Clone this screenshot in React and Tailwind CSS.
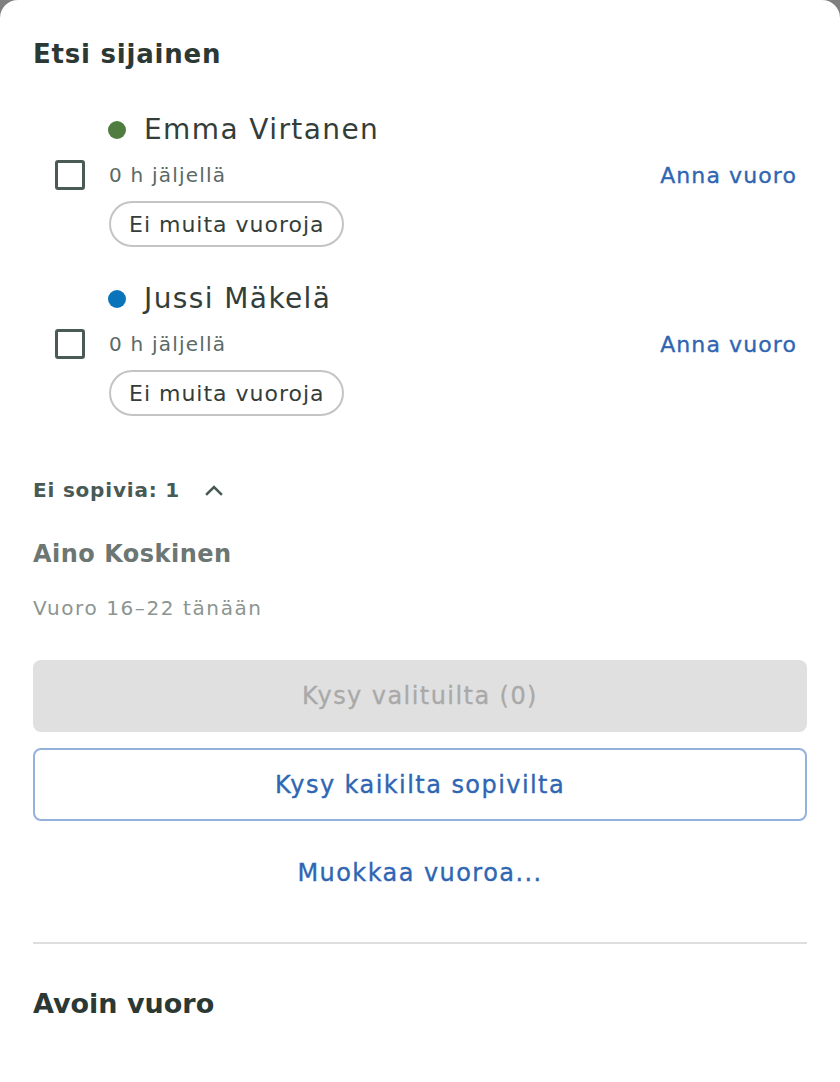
import React from 'react';

const candidates = [
  { name: 'Emma Virtanen', dot: 'bg-[#4f7d3f]' },
  { name: 'Jussi Mäkelä', dot: 'bg-[#0a74bb]' },
];

const font = { fontFamily: '"DejaVu Sans", Verdana, sans-serif' };

const Candidate = ({ name, dot }) => (
  <div className="flex flex-col">
    <div className="flex items-center gap-[18px] pl-[75px] h-[36px]">
      <span className={`w-[18px] h-[18px] rounded-full ${dot}`} />
      <span className="text-[28px] leading-[36px] text-[#333e3a] tracking-[0.05em]">{name}</span>
    </div>
    <div className="flex mt-[12px]">
      <div className="w-[76px] pl-[22px]">
        <div className="w-[30px] h-[30px] border-[3px] border-[#4a5b56] rounded-[3px]" />
      </div>
      <div className="flex-1 flex flex-col">
        <div className="flex items-center justify-between h-[30px]">
          <span className="text-[20px] text-[#5a6a65] tracking-[0.06em]">0 h jäljellä</span>
          <button className="text-[22px] text-[#2f66b3] tracking-[0.05em] pr-[10px] [-webkit-text-stroke:0.35px_#2f66b3]">Anna vuoro</button>
        </div>
        <div className="mt-[11px]">
          <span className="inline-flex items-center h-[46px] px-[18px] rounded-full border-2 border-[#c4c4c4] text-[22px] text-[#333e3a] tracking-[0.045em]">
            Ei muita vuoroja
          </span>
        </div>
      </div>
    </div>
  </div>
);

export default function App() {
  return (
    <div className="min-h-[1082px] bg-[#808080]" style={font}>
      <div className="bg-white rounded-t-[18px] min-h-[1082px] px-[33px] pt-[36px] pb-[40px]">
        <h2 className="text-[26px] leading-[36px] font-bold text-[#2b3834] tracking-[0.03em]">Etsi sijainen</h2>

        <div className="mt-[40px] flex flex-col gap-[34px]">
          {candidates.map(c => (
            <Candidate key={c.name} {...c} />
          ))}
        </div>

        <div className="mt-[59px] flex items-center gap-[24px]">
          <span className="text-[20px] font-bold text-[#485a55] tracking-[0.04em]">Ei sopivia: 1</span>
          <svg width="20" height="14" viewBox="0 0 20 14" fill="none">
            <path d="M3 11 L10 4 L17 11" stroke="#485a55" strokeWidth="2.5" strokeLinecap="square" />
          </svg>
        </div>

        <div className="mt-[31px] text-[24px] font-bold text-[#6c7672] tracking-[0.02em]">Aino Koskinen</div>
        <div className="mt-[21px] text-[20px] text-[#8b9591] tracking-[0.08em]">Vuoro 16–22 tänään</div>

        <div className="mt-[37px] flex flex-col gap-[16px] text-[24px] tracking-[0.06em]">
          <button className="h-[72px] w-full rounded-[8px] bg-[#e0e0e0] text-[#a9a9a9] [-webkit-text-stroke:0.3px_#a9a9a9]">
            Kysy valituilta (0)
          </button>
          <button className="h-[73px] w-full rounded-[8px] border-2 border-[#94b1dc] bg-white text-[#2f66b3] [-webkit-text-stroke:0.35px_#2f66b3]">
            Kysy kaikilta sopivilta
          </button>
          <button className="h-[72px] w-full text-[#2f66b3] [-webkit-text-stroke:0.35px_#2f66b3]">
            Muokkaa vuoroa...
          </button>
        </div>

        <div className="mt-[33px] h-[2px] bg-[#dedede]" />

        <h2 className="mt-[40px] text-[27px] font-bold text-[#2b3834]">Avoin vuoro</h2>
      </div>
    </div>
  );
}
